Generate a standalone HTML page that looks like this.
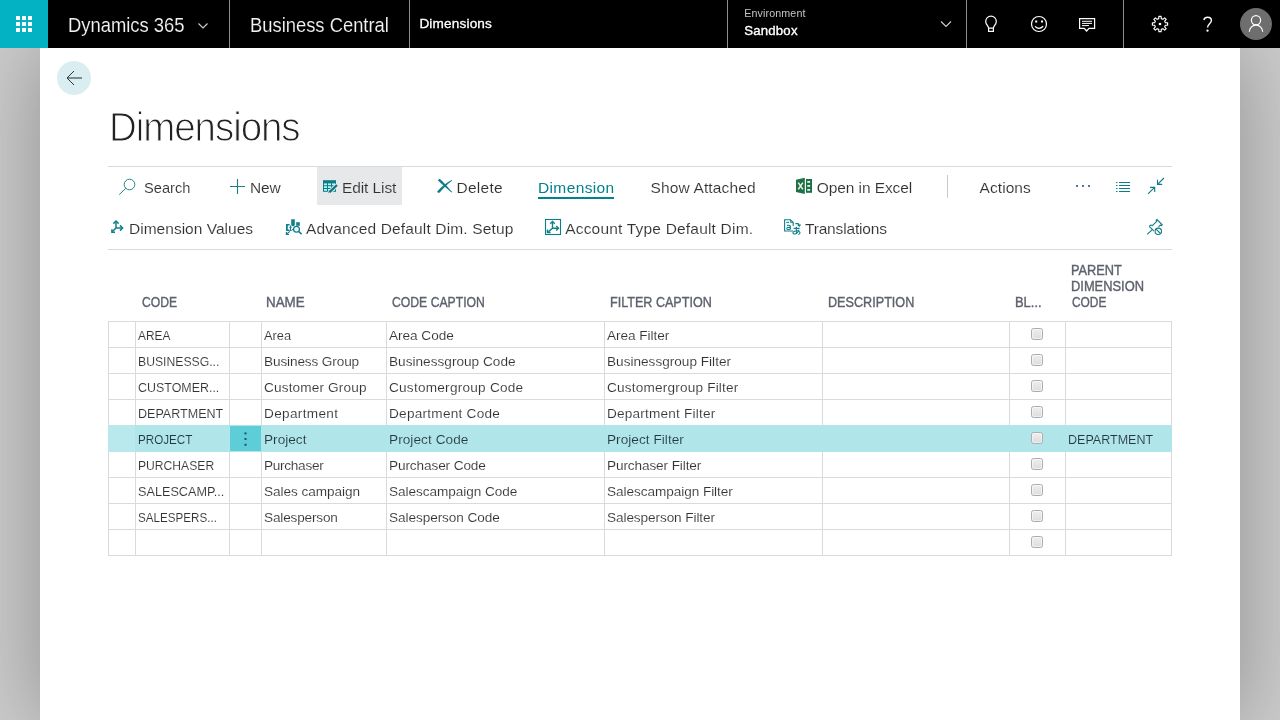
<!DOCTYPE html>
<html><head><meta charset="utf-8"><title>Dimensions</title>
<style>
*{box-sizing:border-box;margin:0;padding:0}
html,body{width:1280px;height:720px;overflow:hidden}
body{font-family:"Liberation Sans",sans-serif;background:#cccccc;position:relative;color:#333}
.t{position:absolute;white-space:nowrap;line-height:1}
#hdr{position:absolute;left:0;top:0;width:1280px;height:48px;background:#000}
#waffle{position:absolute;left:0;top:0;width:48px;height:48px;background:#03b3c4}
.vd{position:absolute;top:0;width:1px;height:48px;background:#8e8e8e}
#panel{position:absolute;left:40px;top:48px;width:1200px;height:674px;background:#fff;box-shadow:0 0 80px 0 rgba(0,0,0,.30)}
.hl{position:absolute;height:1px;background:#d8dadb}
.vl{position:absolute;width:1px;background:#dadada}
.cb{position:absolute;width:12px;height:12px;border:1px solid #adadad;border-radius:2.5px;background:linear-gradient(#eeeeee,#dddddd);box-shadow:inset 0 0 0 1px rgba(255,255,255,.5)}
#ic{position:absolute;left:0;top:0;width:1280px;height:720px;overflow:visible}
</style></head><body>
<div id="panel"></div>
<div id="hdr">
<div id="waffle"></div>
<div class="vd" style="left:229px"></div>
<div class="vd" style="left:409px"></div>
<div class="vd" style="left:727px"></div>
<div class="vd" style="left:966px"></div>
<div class="vd" style="left:1123px"></div>
</div>

<div class="hl" style="left:108px;top:166px;width:1064px"></div>
<div class="hl" style="left:108px;top:249px;width:1064px"></div>
<div style="position:absolute;left:317px;top:167px;width:85px;height:38px;background:#e6e8ea"></div>
<div style="position:absolute;left:538px;top:197px;width:76px;height:2px;background:#00838c"></div>
<div style="position:absolute;left:947px;top:175px;width:1px;height:23px;background:#c8c8c8"></div>
<div style="position:absolute;left:108px;top:425px;width:1064px;height:27px;background:#b0e6ea"></div>
<div style="position:absolute;left:108px;top:425px;width:27px;height:27px;background:#b9e9ed"></div>
<div style="position:absolute;left:230px;top:426px;width:31px;height:25px;background:#5dcdd7"></div>
<div class="hl" style="left:108px;top:321px;width:1064px;background:#dadada"></div>
<div class="hl" style="left:108px;top:347px;width:1064px;background:#dadada"></div>
<div class="hl" style="left:108px;top:373px;width:1064px;background:#dadada"></div>
<div class="hl" style="left:108px;top:399px;width:1064px;background:#dadada"></div>
<div class="hl" style="left:108px;top:477px;width:1064px;background:#dadada"></div>
<div class="hl" style="left:108px;top:503px;width:1064px;background:#dadada"></div>
<div class="hl" style="left:108px;top:529px;width:1064px;background:#dadada"></div>
<div class="hl" style="left:108px;top:555px;width:1064px;background:#dadada"></div>
<div class="vl" style="left:108px;top:321px;height:104px"></div>
<div class="vl" style="left:108px;top:452px;height:104px"></div>
<div class="vl" style="left:135px;top:321px;height:104px"></div>
<div class="vl" style="left:135px;top:452px;height:104px"></div>
<div class="vl" style="left:229px;top:321px;height:104px"></div>
<div class="vl" style="left:229px;top:452px;height:104px"></div>
<div class="vl" style="left:261px;top:321px;height:104px"></div>
<div class="vl" style="left:261px;top:452px;height:104px"></div>
<div class="vl" style="left:386px;top:321px;height:104px"></div>
<div class="vl" style="left:386px;top:452px;height:104px"></div>
<div class="vl" style="left:604px;top:321px;height:104px"></div>
<div class="vl" style="left:604px;top:452px;height:104px"></div>
<div class="vl" style="left:822px;top:321px;height:104px"></div>
<div class="vl" style="left:822px;top:452px;height:104px"></div>
<div class="vl" style="left:1009px;top:321px;height:104px"></div>
<div class="vl" style="left:1009px;top:452px;height:104px"></div>
<div class="vl" style="left:1065px;top:321px;height:104px"></div>
<div class="vl" style="left:1065px;top:452px;height:104px"></div>
<div class="vl" style="left:1171px;top:321px;height:104px"></div>
<div class="vl" style="left:1171px;top:452px;height:104px"></div>
<div class="cb" style="left:1031px;top:328px"></div>
<div class="cb" style="left:1031px;top:354px"></div>
<div class="cb" style="left:1031px;top:380px"></div>
<div class="cb" style="left:1031px;top:406px"></div>
<div class="cb" style="left:1031px;top:432px"></div>
<div class="cb" style="left:1031px;top:458px"></div>
<div class="cb" style="left:1031px;top:484px"></div>
<div class="cb" style="left:1031px;top:510px"></div>
<div class="cb" style="left:1031px;top:536px"></div>
<svg id="ic" viewBox="0 0 1280 720">
<!-- waffle -->
<g fill="#fff">
<rect x="16" y="16" width="4" height="4"/><rect x="22" y="16" width="4" height="4"/><rect x="28" y="16" width="4" height="4"/>
<rect x="16" y="22" width="4" height="4"/><rect x="22" y="22" width="4" height="4"/><rect x="28" y="22" width="4" height="4"/>
<rect x="16" y="28" width="4" height="4"/><rect x="22" y="28" width="4" height="4"/><rect x="28" y="28" width="4" height="4"/>
</g>
<!-- header chevrons -->
<g fill="none" stroke="#d0d0d0" stroke-width="1.1">
<path d="M198.5 23.5 L203 28 L207.5 23.5"/>
<path d="M941 21.5 L946 26.5 L951 21.5"/>
</g>
<!-- bulb -->
<g fill="none" stroke="#fff" stroke-width="1.2">
<path d="M988.6 28.2 C988.6 26 985.7 24.6 985.7 21.4 A5.3 5.3 0 0 1 996.3 21.4 C996.3 24.6 993.4 26 993.4 28.2 Z"/>
<path d="M988.6 28.2 V31.4 H993.4 V28.2"/>
</g>
<!-- smiley -->
<circle cx="1039" cy="24" r="7.5" fill="none" stroke="#fff" stroke-width="1.2"/>
<rect x="1035.2" y="20.5" width="2" height="2" fill="#fff"/><rect x="1041" y="20.5" width="2" height="2" fill="#fff"/>
<path d="M1035 26.3 Q1039 30.3 1043.2 26.3" fill="none" stroke="#fff" stroke-width="1.2"/>
<!-- chat -->
<g fill="none" stroke="#fff" stroke-width="1.2">
<path d="M1079.6 18.6 H1094.6 V28.4 H1089 L1086.6 31 L1084.2 28.4 H1079.6 Z"/>
<path d="M1082 21.3 H1092 M1082 23.4 H1092 M1082 25.6 H1089" stroke-width="1"/>
</g>
<!-- gear -->
<g transform="translate(1160 24)">
<path d="M-1.24 -5.36 L-1.14 -7.62 L1.14 -7.62 L1.24 -5.36 L2.91 -4.66 L4.58 -6.19 L6.19 -4.58 L4.66 -2.91 L5.36 -1.24 L7.62 -1.14 L7.62 1.14 L5.36 1.24 L4.66 2.91 L6.19 4.58 L4.58 6.19 L2.91 4.66 L1.24 5.36 L1.14 7.62 L-1.14 7.62 L-1.24 5.36 L-2.91 4.66 L-4.58 6.19 L-6.19 4.58 L-4.66 2.91 L-5.36 1.24 L-7.62 1.14 L-7.62 -1.14 L-5.36 -1.24 L-4.66 -2.91 L-6.19 -4.58 L-4.58 -6.19 L-2.91 -4.66 Z" fill="none" stroke="#fff" stroke-width="1.15" stroke-linejoin="round"/>
<circle r="1.35" fill="#fff"/>
</g>
<!-- question -->
<path d="M1203.8 20 C1204.5 17.6 1206.5 17.2 1207.6 17.2 C1209.8 17.2 1211.4 18.7 1211.4 20.6 C1211.4 23.6 1207.5 24.2 1207.5 27.6" fill="none" stroke="#fff" stroke-width="1.4"/>
<circle cx="1207.5" cy="30.7" r="1.15" fill="#fff"/>
<!-- avatar -->
<circle cx="1256" cy="24" r="16" fill="#6e6e6e"/>
<circle cx="1256" cy="20.2" r="4.6" fill="none" stroke="#fff" stroke-width="1.2"/>
<path d="M1249.3 31.8 A6.7 6.7 0 0 1 1262.7 31.8" fill="none" stroke="#fff" stroke-width="1.2"/>
<!-- back button -->
<circle cx="74" cy="78" r="17" fill="#daeef1"/>
<path d="M68 78 H82" stroke="#5f6d70" stroke-width="1.5" fill="none"/>
<path d="M74 71 L67 78 L74 85" stroke="#2d3436" stroke-width="1" fill="none"/>
<!-- search -->
<g fill="none" stroke="#1f858c" stroke-width="1">
<circle cx="129.5" cy="184.5" r="5.3"/>
<path d="M125.8 188.3 L119.2 194.6"/>
</g>
<!-- plus -->
<path d="M230 186.5 H245 M237.5 179 V194" stroke="#1a7f86" stroke-width="1.1" fill="none"/>
<!-- edit list -->
<rect x="323" y="180.2" width="13" height="11.6" fill="#0f7c83"/>
<g fill="#b5f3fb">
<rect x="324" y="183.4" width="3" height="1.8"/><rect x="328" y="183.4" width="3" height="1.8"/><rect x="332" y="183.4" width="3" height="1.8"/>
<rect x="324" y="186.2" width="3" height="1.8"/><rect x="328" y="186.2" width="3" height="1.8"/><rect x="332" y="186.2" width="3" height="1.8"/>
<rect x="324" y="189" width="3" height="1.8"/><rect x="328" y="189" width="3" height="1.8"/><rect x="332" y="189" width="3" height="1.8"/>
</g>
<path d="M337 185 L329 192.8" stroke="#e6e8ea" stroke-width="4.2" fill="none"/>
<path d="M337 185 L329.6 192.2" stroke="#0f7c83" stroke-width="2.4" fill="none"/>
<path d="M328.2 193.6 L330.8 191 L329 190.6 Z" fill="#0f7c83"/>
<!-- delete X -->
<path d="M438 180.6 Q437.9 179.4 439.2 178.9 Q440 178.8 440.6 179.4 C444 182.8 448.4 187.4 452.2 191.9 L451.5 192.6 C447 188.6 442 184.6 438 180.6 Z" fill="#0e7f86"/>
<path d="M437.4 191.2 C441.6 186.4 447 182.4 451.8 180 L452.1 180.7 C447.6 184 443.4 188 439.8 192.4 Q438.8 193.2 437.8 192.6 Q437 192 437.4 191.2 Z" fill="#0e7f86"/>
<!-- excel -->
<path d="M796 179.8 L804.8 177.8 V194 L796 192 Z" fill="#1e7145"/>
<rect x="806" y="179" width="6" height="13.8" fill="#1e7145"/>
<g fill="#e8f5ee"><rect x="807.3" y="181" width="2.8" height="1.8"/><rect x="807.3" y="185" width="2.8" height="1.8"/><rect x="807.3" y="189" width="2.8" height="1.8"/></g>
<path d="M798.3 182.6 L802.8 189.4 M802.8 182.6 L798.3 189.4" stroke="#e8f5ee" stroke-width="1.5" fill="none"/>
<!-- more dots -->
<g fill="#4d78a2"><rect x="1076" y="185" width="2" height="2"/><rect x="1082" y="185" width="2" height="2"/><rect x="1088" y="185" width="2" height="2"/></g>
<!-- list icon -->
<g fill="#0f7c83">
<rect x="1116" y="182" width="1.5" height="1"/><rect x="1119" y="182" width="11" height="1"/>
<rect x="1116" y="185" width="1.5" height="1"/><rect x="1119" y="185" width="11" height="1"/>
<rect x="1116" y="188" width="1.5" height="1"/><rect x="1119" y="188" width="11" height="1"/>
<rect x="1116" y="191" width="1.5" height="1"/><rect x="1119" y="191" width="11" height="1"/>
</g>
<!-- collapse -->
<g fill="none" stroke="#0f7c83" stroke-width="1.1">
<path d="M1163.9 178 L1157.6 184.3 M1157.5 179.8 V184.4 H1162.2"/>
<path d="M1148 193.8 L1154.6 187.4 M1150 187.4 H1154.7 V192"/>
</g>
<!-- pin -->
<g fill="none" stroke="#0f7c83" stroke-width="1.1">
<path d="M1147.2 234.4 L1152.3 229.6"/>
<path d="M1149.2 226.3 L1150.6 225 L1152.4 225.6 L1156.6 221.4 L1156.2 220.2 L1157 219.6 L1162.2 224.8 L1161.4 225.6 L1160.2 225.2 L1157.6 227.8"/>
<path d="M1149.2 226.3 L1154.4 231.4"/>
<circle cx="1158.3" cy="231.3" r="4" fill="#fff" stroke="#fff"/><circle cx="1158.3" cy="231.3" r="3.2"/>
<path d="M1156.1 229.1 L1160.5 233.5"/>
</g>
<!-- dimension values icon -->
<g fill="none" stroke="#10808a" stroke-width="1.5">
<path d="M116 228 V221 M116 228 H122.4 M116 228 L112.2 231.8"/>
<path d="M113.4 223.6 L116 221 L118.6 223.6 M120 225.4 L122.6 228 L120 230.6 M111.9 229.2 V232.2 H115"/>
</g>
<!-- adv default dim icon -->
<g fill="#10808a">
<path d="M286 224 H289.6 V225.5 H287.8 V229.6 H289.2 V231 H286 Z"/>
<path d="M291.2 219.2 H294.8 V225.2 L293 226.6 L291.2 225.2 Z"/>
<rect x="296.2" y="222.2" width="3.6" height="3.6"/>
<circle cx="292.5" cy="229.7" r=".65"/>
</g>
<g fill="none" stroke="#10808a">
<path d="M290.5 225.6 V230.4 M289.3 227.3 H291.7 M289.5 230.4 H291.6" stroke-width="1.1"/>
<path d="M289.8 231.4 L286.6 234.2 M286.4 231.9 V234.5 H289" stroke-width="1.2"/>
<circle cx="296.5" cy="229.3" r="2.9" fill="#fff" stroke-width="1.3"/>
<path d="M298.7 231.5 L301.6 234.2" stroke-width="1.7"/>
</g>
<path d="M296.5 227.9 L297.9 229.3 L296.5 230.7 L295.1 229.3 Z" fill="#d9f3f5"/>
<!-- account type icon -->
<rect x="545.5" y="219.5" width="15" height="15" fill="none" stroke="#0d7c84" stroke-width="1.1"/>
<g fill="none" stroke="#10808a" stroke-width="1.4">
<path d="M552.5 228.3 V221.6 M552.5 228.3 H558.4 M552.5 228.3 L547.6 232.4"/>
<path d="M550.2 223.8 L552.5 221.5 L554.8 223.8 M556.2 226 L558.5 228.3 L556.2 230.6 M547.4 229.4 V232.5 H550.6"/>
</g>
<!-- translations icon -->
<g fill="none" stroke="#10808a" stroke-width="1.1">
<path d="M793 231 H784.6 V219.8 H790.4 L793.2 222.6 V226"/>
<path d="M790.4 219.8 V222.6 H793.2" stroke-width=".8"/>
<path d="M786.4 222.4 H789"/>
<path d="M787 225.4 Q790.6 224.6 790.4 227 V229.6 M790.4 227.4 Q786.6 227 786.8 228.8 Q787.2 230.2 790.4 229"/>
<path d="M795.4 223.6 H798 Q799.2 223.8 799.2 225.6 M797.8 224.6 L799.2 226.2 L800.6 224.6"/>
<path d="M793.6 228.4 H799.6 M796.4 226.8 Q796 231 796.8 234 M799 229.8 Q797 234.5 794 234 Q791.8 233 794 231.4 Q798.6 229.6 800 232.4 Q800.2 234 798.4 234.6"/>
</g>
<!-- row dots -->
<g fill="#23565c"><rect x="244.5" y="432.4" width="2" height="2"/><rect x="244.5" y="438" width="2" height="2"/><rect x="244.5" y="443.8" width="2" height="2"/></g>
</svg>

<div id="tx" style="position:absolute;left:0;top:0;width:1280px;height:720px;will-change:transform">
<span class="t" style="left:68.10px;top:14.65px;font-size:20.5px;transform-origin:0 0;transform:scaleX(0.8974);color:#f2f2f2;-webkit-text-stroke:.12px #000">Dynamics 365</span>
<span class="t" style="left:249.90px;top:14.65px;font-size:20.5px;transform-origin:0 0;transform:scaleX(0.8963);color:#f2f2f2;-webkit-text-stroke:.12px #000">Business Central</span>
<span class="t" style="left:419.40px;top:17.29px;font-size:13.6px;letter-spacing:0.165px;color:#fff;-webkit-text-stroke:.3px #fff">Dimensions</span>
<span class="t" style="left:744.30px;top:7.84px;font-size:10.7px;letter-spacing:0.117px;color:#c4c4c4">Environment</span>
<span class="t" style="left:744.20px;top:23.73px;font-size:13.2px;letter-spacing:0.205px;color:#fff;-webkit-text-stroke:.35px #fff">Sandbox</span>
<span class="t" style="left:108.90px;top:106.72px;font-size:40.5px;letter-spacing:-1.101px;transform-origin:0 0;transform:scaleX(0.9500);color:#222;-webkit-text-stroke:1.1px #fff">Dimensions</span>
<span class="t" style="left:143.75px;top:179.88px;font-size:15.5px;transform-origin:0 0;transform:scaleX(0.9445);color:#323130;-webkit-text-stroke:.12px #fff">Search</span>
<span class="t" style="left:250.00px;top:179.88px;font-size:15.5px;letter-spacing:-0.132px;color:#323130;-webkit-text-stroke:.12px #fff">New</span>
<span class="t" style="left:342.00px;top:179.88px;font-size:15.5px;letter-spacing:-0.097px;color:#323130;-webkit-text-stroke:.12px #e6e8ea">Edit List</span>
<span class="t" style="left:456.50px;top:179.88px;font-size:15.5px;letter-spacing:0.273px;color:#323130;-webkit-text-stroke:.12px #fff">Delete</span>
<span class="t" style="left:538.00px;top:179.88px;font-size:15.5px;letter-spacing:0.368px;color:#00838c">Dimension</span>
<span class="t" style="left:650.50px;top:179.88px;font-size:15.5px;letter-spacing:0.138px;color:#323130;-webkit-text-stroke:.12px #fff">Show Attached</span>
<span class="t" style="left:816.75px;top:179.88px;font-size:15.5px;letter-spacing:-0.084px;color:#323130;-webkit-text-stroke:.12px #fff">Open in Excel</span>
<span class="t" style="left:979.50px;top:179.88px;font-size:15.5px;letter-spacing:0.078px;color:#323130;-webkit-text-stroke:.12px #fff">Actions</span>
<span class="t" style="left:129.00px;top:220.88px;font-size:15.5px;letter-spacing:0.018px;color:#323130;-webkit-text-stroke:.12px #fff">Dimension Values</span>
<span class="t" style="left:306.10px;top:220.88px;font-size:15.5px;letter-spacing:0.153px;color:#323130;-webkit-text-stroke:.12px #fff">Advanced Default Dim. Setup</span>
<span class="t" style="left:565.20px;top:220.88px;font-size:15.5px;letter-spacing:0.194px;color:#323130;-webkit-text-stroke:.12px #fff">Account Type Default Dim.</span>
<span class="t" style="left:804.90px;top:220.88px;font-size:15.5px;letter-spacing:-0.155px;color:#323130;-webkit-text-stroke:.12px #fff">Translations</span>
<span class="t" style="left:141.60px;top:294.88px;font-size:14.2px;transform-origin:0 0;transform:scaleX(0.8562);color:#5d626d;-webkit-text-stroke:.38px #5d626d">CODE</span>
<span class="t" style="left:266.46px;top:294.88px;font-size:14.2px;transform-origin:0 0;transform:scaleX(0.9437);color:#5d626d;-webkit-text-stroke:.38px #5d626d">NAME</span>
<span class="t" style="left:392.40px;top:294.88px;font-size:14.2px;transform-origin:0 0;transform:scaleX(0.8603);color:#5d626d;-webkit-text-stroke:.38px #5d626d">CODE CAPTION</span>
<span class="t" style="left:609.61px;top:294.88px;font-size:14.2px;transform-origin:0 0;transform:scaleX(0.8866);color:#5d626d;-webkit-text-stroke:.38px #5d626d">FILTER CAPTION</span>
<span class="t" style="left:827.61px;top:294.88px;font-size:14.2px;transform-origin:0 0;transform:scaleX(0.8902);color:#5d626d;-webkit-text-stroke:.38px #5d626d">DESCRIPTION</span>
<span class="t" style="left:1015.09px;top:294.88px;font-size:14.2px;transform-origin:0 0;transform:scaleX(0.9105);color:#5d626d;-webkit-text-stroke:.38px #5d626d">BL...</span>
<span class="t" style="left:1071.00px;top:262.83px;font-size:14.2px;transform-origin:0 0;transform:scaleX(0.9010);color:#5d626d;-webkit-text-stroke:.38px #5d626d">PARENT</span>
<span class="t" style="left:1070.99px;top:278.88px;font-size:14.2px;transform-origin:0 0;transform:scaleX(0.9083);color:#5d626d;-webkit-text-stroke:.38px #5d626d">DIMENSION</span>
<span class="t" style="left:1071.90px;top:294.88px;font-size:14.2px;transform-origin:0 0;transform:scaleX(0.8389);color:#5d626d;-webkit-text-stroke:.38px #5d626d">CODE</span>
<span class="t" style="left:138.00px;top:328.79px;font-size:13.6px;transform-origin:0 0;transform:scaleX(0.8722);color:#333;-webkit-text-stroke:.12px #fff">AREA</span>
<span class="t" style="left:264.00px;top:328.79px;font-size:13.6px;transform-origin:0 0;transform:scaleX(0.9433);color:#333;-webkit-text-stroke:.12px #fff">Area</span>
<span class="t" style="left:389.00px;top:328.79px;font-size:13.6px;letter-spacing:-0.029px;color:#333;-webkit-text-stroke:.12px #fff">Area Code</span>
<span class="t" style="left:607.00px;top:328.79px;font-size:13.6px;letter-spacing:-0.047px;color:#333;-webkit-text-stroke:.12px #fff">Area Filter</span>
<span class="t" style="left:138.00px;top:354.79px;font-size:13.6px;transform-origin:0 0;transform:scaleX(0.8968);color:#333;-webkit-text-stroke:.12px #fff">BUSINESSG...</span>
<span class="t" style="left:264.00px;top:354.79px;font-size:13.6px;letter-spacing:-0.120px;color:#333;-webkit-text-stroke:.12px #fff">Business Group</span>
<span class="t" style="left:389.00px;top:354.79px;font-size:13.6px;letter-spacing:0.021px;color:#333;-webkit-text-stroke:.12px #fff">Businessgroup Code</span>
<span class="t" style="left:607.00px;top:354.79px;font-size:13.6px;letter-spacing:0.006px;color:#333;-webkit-text-stroke:.12px #fff">Businessgroup Filter</span>
<span class="t" style="left:138.00px;top:380.79px;font-size:13.6px;transform-origin:0 0;transform:scaleX(0.9149);color:#333;-webkit-text-stroke:.12px #fff">CUSTOMER...</span>
<span class="t" style="left:264.00px;top:380.79px;font-size:13.6px;letter-spacing:0.152px;color:#333;-webkit-text-stroke:.12px #fff">Customer Group</span>
<span class="t" style="left:389.00px;top:380.79px;font-size:13.6px;letter-spacing:0.247px;color:#333;-webkit-text-stroke:.12px #fff">Customergroup Code</span>
<span class="t" style="left:607.00px;top:380.79px;font-size:13.6px;letter-spacing:0.192px;color:#333;-webkit-text-stroke:.12px #fff">Customergroup Filter</span>
<span class="t" style="left:138.00px;top:406.79px;font-size:13.6px;transform-origin:0 0;transform:scaleX(0.9230);color:#333;-webkit-text-stroke:.12px #fff">DEPARTMENT</span>
<span class="t" style="left:264.00px;top:406.79px;font-size:13.6px;letter-spacing:0.328px;color:#333;-webkit-text-stroke:.12px #fff">Department</span>
<span class="t" style="left:389.00px;top:406.79px;font-size:13.6px;letter-spacing:0.255px;color:#333;-webkit-text-stroke:.12px #fff">Department Code</span>
<span class="t" style="left:607.00px;top:406.79px;font-size:13.6px;letter-spacing:0.208px;color:#333;-webkit-text-stroke:.12px #fff">Department Filter</span>
<span class="t" style="left:138.00px;top:432.79px;font-size:13.6px;transform-origin:0 0;transform:scaleX(0.8568);color:#23383c;-webkit-text-stroke:.12px #b0e6ea">PROJECT</span>
<span class="t" style="left:264.00px;top:432.79px;font-size:13.6px;letter-spacing:0.028px;color:#23383c;-webkit-text-stroke:.12px #b0e6ea">Project</span>
<span class="t" style="left:389.00px;top:432.79px;font-size:13.6px;letter-spacing:0.071px;color:#23383c;-webkit-text-stroke:.12px #b0e6ea">Project Code</span>
<span class="t" style="left:607.00px;top:432.79px;font-size:13.6px;letter-spacing:0.041px;color:#23383c;-webkit-text-stroke:.12px #b0e6ea">Project Filter</span>
<span class="t" style="left:138.00px;top:458.79px;font-size:13.6px;transform-origin:0 0;transform:scaleX(0.8920);color:#333;-webkit-text-stroke:.12px #fff">PURCHASER</span>
<span class="t" style="left:264.00px;top:458.79px;font-size:13.6px;letter-spacing:-0.279px;color:#333;-webkit-text-stroke:.12px #fff">Purchaser</span>
<span class="t" style="left:389.00px;top:458.79px;font-size:13.6px;letter-spacing:-0.105px;color:#333;-webkit-text-stroke:.12px #fff">Purchaser Code</span>
<span class="t" style="left:607.00px;top:458.79px;font-size:13.6px;letter-spacing:-0.108px;color:#333;-webkit-text-stroke:.12px #fff">Purchaser Filter</span>
<span class="t" style="left:138.00px;top:484.79px;font-size:13.6px;transform-origin:0 0;transform:scaleX(0.9314);color:#333;-webkit-text-stroke:.12px #fff">SALESCAMP...</span>
<span class="t" style="left:264.00px;top:484.79px;font-size:13.6px;letter-spacing:-0.051px;color:#333;-webkit-text-stroke:.12px #fff">Sales campaign</span>
<span class="t" style="left:389.00px;top:484.79px;font-size:13.6px;letter-spacing:-0.056px;color:#333;-webkit-text-stroke:.12px #fff">Salescampaign Code</span>
<span class="t" style="left:607.00px;top:484.79px;font-size:13.6px;letter-spacing:-0.058px;color:#333;-webkit-text-stroke:.12px #fff">Salescampaign Filter</span>
<span class="t" style="left:138.00px;top:510.79px;font-size:13.6px;transform-origin:0 0;transform:scaleX(0.8567);color:#333;-webkit-text-stroke:.12px #fff">SALESPERS...</span>
<span class="t" style="left:264.00px;top:510.79px;font-size:13.6px;letter-spacing:-0.171px;color:#333;-webkit-text-stroke:.12px #fff">Salesperson</span>
<span class="t" style="left:389.00px;top:510.79px;font-size:13.6px;letter-spacing:-0.066px;color:#333;-webkit-text-stroke:.12px #fff">Salesperson Code</span>
<span class="t" style="left:607.00px;top:510.79px;font-size:13.6px;letter-spacing:-0.090px;color:#333;-webkit-text-stroke:.12px #fff">Salesperson Filter</span>
<span class="t" style="left:1068.00px;top:432.79px;font-size:13.6px;transform-origin:0 0;transform:scaleX(0.9219);color:#23383c;-webkit-text-stroke:.12px #b0e6ea">DEPARTMENT</span>
</div>
</body></html>
